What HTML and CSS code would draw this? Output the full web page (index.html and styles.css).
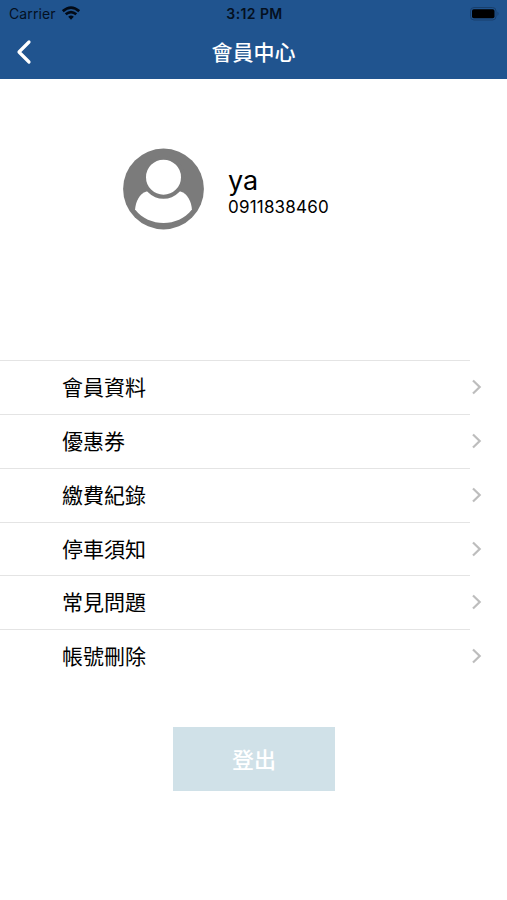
FILE: index.html
```html
<!DOCTYPE html>
<html lang="zh-Hant">
<head>
<meta charset="utf-8">
<title>會員中心</title>
<link rel="stylesheet" href="styles.css">
</head>
<body>
<header class="top">
  <div class="status">
    <div class="carrier"><span>Carrier</span>
      <svg class="wifi" width="18" height="14" viewBox="0 0 18 14" fill="none" stroke="#020a16" stroke-width="2.7"><path d="M.8 5.200Q9-1.800 17.200 5.200M3.700 8.300Q9 3.900 14.300 8.300"/><path d="M6.200 10.700Q9 8.500 11.800 10.700L9 13.700Z" fill="#020a16" stroke="none"/></svg>
    </div>
    <div class="time">3:12 PM</div>
    <div class="power">
      <svg width="30" height="14" viewBox="0 0 30 14"><rect x=".5" y=".5" width="25.5" height="12.500" rx="3.500" fill="none" stroke="#183f6c"/><rect x="2" y="2.300" width="22.500" height="9" rx="1.800" fill="#000"/><path d="M27.500 4.500q2 2.200 0 4.400z" fill="#183f6c"/></svg>
    </div>
  </div>
  <nav class="nav">
    <svg class="back" width="16" height="26" viewBox="0 0 16 26" fill="none" stroke="#fff" stroke-width="3.200" stroke-linecap="round" stroke-linejoin="round"><path d="M13 3L3 13L13 23"/></svg>
    <h1>會員中心</h1>
  </nav>
</header>
<main>
  <section class="profile">
    <svg class="avatar" width="82" height="82" viewBox="0 0 82 82"><circle cx="41.500" cy="41" r="40.400" fill="#7b7b7b"/><path d="M24.500 43.500H58.500C65.500 45.500 69.500 54 69.900 61.500C56 79.500 27 79.500 13.100 61.500C13.500 54 17.500 45.500 24.500 43.500Z" fill="#fff"/><circle cx="41.500" cy="29.200" r="19.500" fill="#fff" stroke="#7b7b7b" stroke-width="4"/></svg>
    <div class="who">
      <div class="name">ya</div>
      <div class="phone">0911838460</div>
    </div>
  </section>
  <ul class="menu">
    <li><span>會員資料</span><svg width="12" height="18" viewBox="0 0 12 18"><path d="M2 2.500L8.700 9L2 15.500"/></svg></li>
    <li><span>優惠券</span><svg width="12" height="18" viewBox="0 0 12 18"><path d="M2 2.500L8.700 9L2 15.500"/></svg></li>
    <li><span>繳費紀錄</span><svg width="12" height="18" viewBox="0 0 12 18"><path d="M2 2.500L8.700 9L2 15.500"/></svg></li>
    <li><span>停車須知</span><svg width="12" height="18" viewBox="0 0 12 18"><path d="M2 2.500L8.700 9L2 15.500"/></svg></li>
    <li><span>常見問題</span><svg width="12" height="18" viewBox="0 0 12 18"><path d="M2 2.500L8.700 9L2 15.500"/></svg></li>
    <li><span>帳號刪除</span><svg width="12" height="18" viewBox="0 0 12 18"><path d="M2 2.500L8.700 9L2 15.500"/></svg></li>
  </ul>
  <button class="logout">登出</button>
</main>
</body>
</html>
```
FILE: styles.css
```css
* { box-sizing: border-box; }
body {
  margin: 0;
  height: 900px;
  background: #fff;
  color: #000;
  font-family: Inter, "Noto Sans CJK TC", sans-serif;
}
.top { height: 79px; background: #20548f; }
.status {
  display: grid;
  grid-template-columns: 1fr auto 1fr;
  align-items: center;
  height: 27px;
  padding: 0 7px 0 9px;
  color: #04101f;
  font-size: 14px;
}
.carrier { display: flex; align-items: center; gap: 6px; letter-spacing: .1px; }
.wifi { display: block; margin-top: -2px; }
.time { font-weight: 600; letter-spacing: .4px; }
.power { display: flex; justify-content: flex-end; }
.nav {
  display: grid;
  grid-template-columns: 40px 1fr 40px;
  align-items: center;
  height: 50px;
}
.back { margin-left: 16px; }
.nav h1 {
  margin: 0;
  padding-top: 2px;
  color: #fff;
  font-size: 21px;
  font-weight: 500;
  line-height: 30px;
  text-align: center;
}
.profile {
  display: flex;
  align-items: flex-start;
  height: 281px;
  padding: 69px 0 0 122px;
}
.who { margin: 17px 0 0 24px; }
.name { font-size: 27px; line-height: 31px; }
.phone { font-size: 17px; line-height: 22px; letter-spacing: .2px; }
.menu { margin: 0; padding: .3px 0 0; list-style: none; }
.menu li {
  display: flex;
  align-items: center;
  justify-content: space-between;
  height: 53.8px;
  padding: 0 24px 0 62px;
  background: linear-gradient(#e4e4e4, #e4e4e4) 0 0 / 470px 1px no-repeat;
  font-size: 21px;
  line-height: 30px;
}
.menu span { padding-top: 2px; }
.menu svg { fill: none; stroke: #bdbdbd; stroke-width: 2.2; }
.logout {
  display: block;
  width: 162px;
  height: 64px;
  margin: 44.1px auto 0;
  padding: 2px 0 0 1px;
  border: 0;
  background: #d0e1e8;
  color: #fff;
  font: 500 22px/30px Inter, "Noto Sans CJK TC", sans-serif;
}
```
